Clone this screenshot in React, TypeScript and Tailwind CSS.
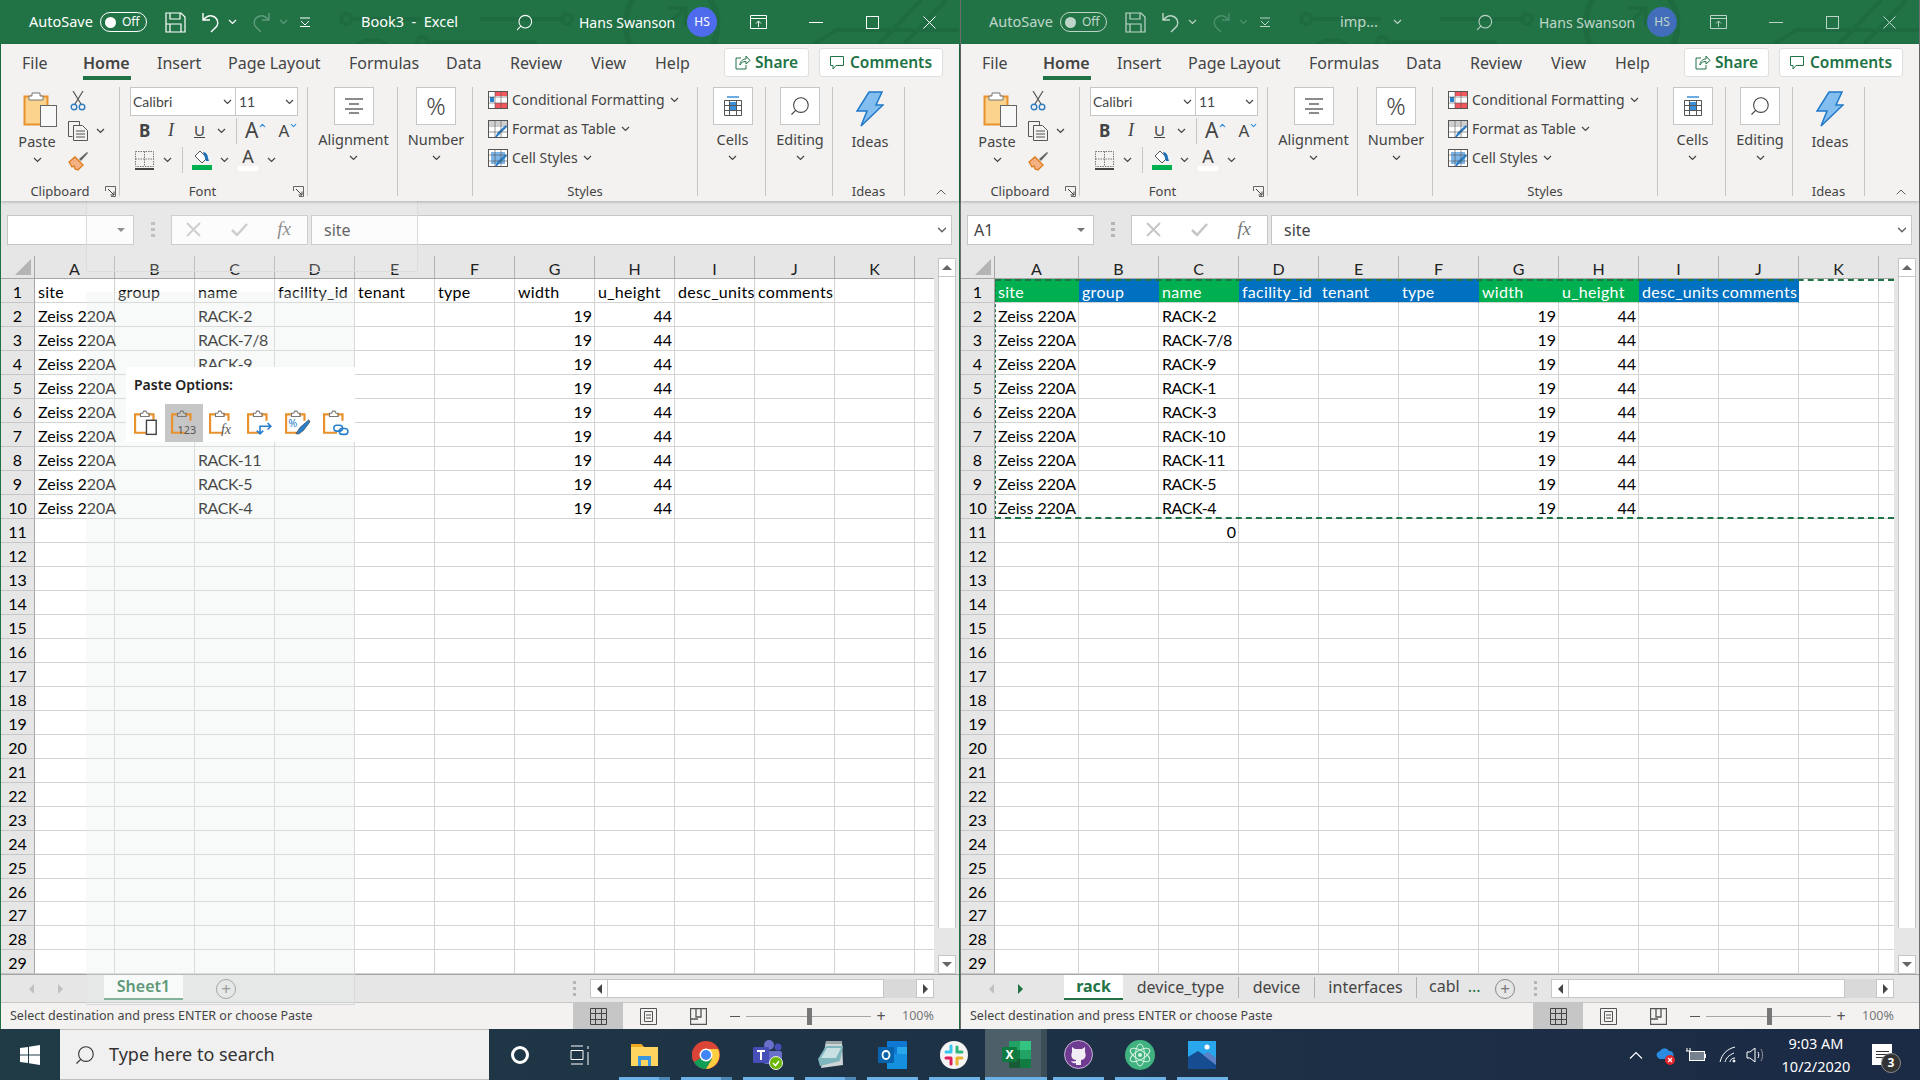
import type { ReactNode } from 'react';
import { ChevronDown, ChevronUp, Search } from 'lucide-react';

const COLS = ['A', 'B', 'C', 'D', 'E', 'F', 'G', 'H', 'I', 'J', 'K'];
const HEADERS = ['site', 'group', 'name', 'facility_id', 'tenant', 'type', 'width', 'u_height', 'desc_units', 'comments', ''];
const HEADER_FILL = ['bg-[#00b050]', 'bg-[#0070c0]', 'bg-[#00b050]', 'bg-[#0070c0]', 'bg-[#0070c0]', 'bg-[#0070c0]', 'bg-[#00b050]', 'bg-[#00b050]', 'bg-[#0070c0]', 'bg-[#0070c0]', ''];
const RACKS = ['RACK-2', 'RACK-7/8', 'RACK-9', 'RACK-1', 'RACK-3', 'RACK-10', 'RACK-11', 'RACK-5', 'RACK-4'];
const ROW_COUNT = 29;

const TABS = [
  { label: 'File', width: 'w-[61px]' },
  { label: 'Home', width: 'w-[74px]' },
  { label: 'Insert', width: 'w-[71px]' },
  { label: 'Page Layout', width: 'w-[121px]' },
  { label: 'Formulas', width: 'w-[97px]' },
  { label: 'Data', width: 'w-[64px]' },
  { label: 'Review', width: 'w-[81px]' },
  { label: 'View', width: 'w-[64px]' },
  { label: 'Help', width: 'w-[50px]' },
];

function Caret({ className = '' }: { className?: string }) {
  return (
    <svg width="9" height="6" viewBox="0 0 9 6" className={className}>
      <path d="M1 1l3.5 3.5L8 1" fill="none" stroke="currentColor" strokeWidth="1.2" />
    </svg>
  );
}

function Launcher() {
  return (
    <svg width="11" height="11" viewBox="0 0 11 11">
      <path d="M.5 5V.5H10.5V10.5H6" fill="none" stroke="#666" />
      <path d="M3 3l6 6M9 5.5V9H5.5" fill="none" stroke="#444" />
    </svg>
  );
}

function CircuitLines() {
  return (
    <svg className="absolute inset-0 w-full h-full" viewBox="0 0 960 44" fill="none" stroke="#1e6b41" strokeWidth="4">
      <circle cx="346" cy="19" r="5" />
      <path d="M351 19h70M565 19h-85" />
      <circle cx="567" cy="19" r="5" />
      <circle cx="372" cy="66" r="26" />
      <circle cx="422" cy="42" r="5" />
      <path d="M427 42h110" />
      <circle cx="672" cy="24" r="46" strokeWidth="6" />
      <path d="M662 30l24-22M668 8h18v18" />
      <path d="M815 44l22-14h123M880 44l42-44M905 44l42-44" />
    </svg>
  );
}

function TitleBar({ active, title }: { active: boolean; title: string }) {
  return (
    <div className="relative h-[44px] shrink-0 bg-[#217346] text-white">
      <CircuitLines />
      <div className={`relative flex h-full items-center ${active ? '' : 'opacity-70'}`}>
        <span className="ml-[28px] w-[71px] text-[14.5px]">AutoSave</span>
        <div className="flex h-[20px] w-[47px] items-center rounded-full border border-white pl-[4px]">
          <span className="h-[11px] w-[11px] rounded-full bg-white" />
          <span className="ml-[6px] text-[12px]">Off</span>
        </div>
        <svg width="21" height="21" viewBox="0 0 21 21" fill="none" stroke="white" strokeWidth="1.2" className="ml-[18px]">
          <path d="M1 1h15l4 4v15H1zM5 1v6h10V1M5 20v-8h11v8M1 12h4" />
        </svg>
        <svg width="20" height="21" viewBox="0 0 20 21" fill="none" stroke="white" strokeWidth="1.4" className="ml-[15px]">
          <path d="M2 1v7h7M2 8c3-3 6-5 9-4 5 1 7 6 5 10l-6 6" />
        </svg>
        <Caret className="ml-[7px]" />
        <svg width="20" height="21" viewBox="0 0 20 21" fill="none" stroke="#5f9c7e" strokeWidth="1.4" className="ml-[14px]">
          <path d="M18 1v7h-7M18 8c-3-3-6-5-9-4-5 1-7 6-5 10l6 6" />
        </svg>
        <Caret className="ml-[8px] text-[#5f9c7e]" />
        <svg width="10" height="10" viewBox="0 0 10 10" fill="none" stroke="white" className="ml-[12px]">
          <path d="M0 1h10M1 4l4 4 4-4M0 9.500h10" />
        </svg>
        <div className="ml-[51px] flex w-[150px] items-center text-[14.5px] whitespace-pre">
          {active ? (
            title
          ) : (
            <>
              <span className="ml-[19px] w-[53px]">{title}</span>
              <Caret />
            </>
          )}
        </div>
        <Search size={19} strokeWidth={1.3} className="ml-[4px] -scale-x-100" />
        <span className="ml-[45px] w-[100px] text-[14px] whitespace-nowrap">Hans Swanson</span>
        <span className="ml-[8px] flex h-[30px] w-[30px] items-center justify-center rounded-full bg-[#4f6bed] text-[12px]">HS</span>
        <svg width="17" height="14" viewBox="0 0 17 14" fill="none" stroke="white" className="ml-[33px]">
          <path d="M.5.5h16v13H.5zM.5 3.500h16M8.500 12V6M6 8.500l2.500-2.500L11 8.500" />
        </svg>
        <span className="ml-[42px] h-[1px] w-[14px] bg-white" />
        <span className="ml-[43px] h-[13px] w-[13px] border border-white" />
        <svg width="13" height="13" viewBox="0 0 13 13" stroke="white" className="ml-[44px]">
          <path d="M.5.5l12 12M12.500.5l-12 12" />
        </svg>
      </div>
    </div>
  );
}

function RibbonTabs() {
  return (
    <div className="flex h-[36px] items-center pl-[21px] text-[16px] text-[#444]">
      {TABS.map((tab) => (
        <div key={tab.label} className={`relative h-full leading-[38px] ${tab.width} ${tab.label === 'Home' ? 'font-semibold' : ''}`}>
          {tab.label}
          {tab.label === 'Home' && <span className="absolute left-0 top-[32px] h-[4px] w-[48px] bg-[#217346]" />}
        </div>
      ))}
      <div className="ml-[19px] flex h-[29px] w-[85px] items-center justify-center gap-[4px] rounded-[3px] border border-[#e1dfdd] bg-white pt-[1px] text-[15.5px] font-semibold text-[#217346]">
        <svg width="16" height="15" viewBox="0 0 16 15" fill="none" stroke="#217346">
          <path d="M6 3H1v11h10v-4M5 10c0-4 3-6 6-6V1l4 4.500L11 9V6.500c-3 0-5 1-6 3.500z" />
        </svg>
        Share
      </div>
      <div className="ml-[10px] flex h-[29px] w-[124px] items-center justify-center gap-[6px] rounded-[3px] border border-[#e1dfdd] bg-white pt-[1px] text-[15.5px] font-semibold text-[#217346]">
        <svg width="14" height="14" viewBox="0 0 14 14" fill="none" stroke="#217346">
          <path d="M.5.5h13v9H6L3 13V9.500H.5z" />
        </svg>
        Comments
      </div>
    </div>
  );
}

function Group({ width, label, labelShift = '', launcher, children }: { width: string; label?: string; labelShift?: string; launcher?: boolean; children: ReactNode }) {
  return (
    <div className={`relative my-[7px] h-[109px] shrink-0 border-r border-[#c8c6c4] ${width}`}>
      {children}
      <div className={`absolute inset-x-0 top-[96px] text-center text-[13px] leading-[17px] text-[#444] ${labelShift}`}>{label}</div>
      {launcher && (
        <div className="absolute right-[3px] top-[99px]">
          <Launcher />
        </div>
      )}
    </div>
  );
}

function BoxedGroup({ width, label, icon }: { width: string; label: string; icon: ReactNode }) {
  return (
    <Group width={width}>
      <div className="flex flex-col items-center pl-[2px] text-[#444]">
        <div className="flex h-[38px] w-[40px] items-center justify-center border border-[#c6c6c6] bg-white">{icon}</div>
        <span className="mt-[4px] text-[14.5px] leading-[20px]">{label}</span>
        <Caret className="mt-[6px]" />
      </div>
    </Group>
  );
}

function ClipboardGroup() {
  return (
    <Group width="w-[119px]" label="Clipboard" launcher>
      <div className="flex pl-[8px] text-[#444]">
        <div className="flex w-[56px] flex-col items-center">
          <svg width="35" height="38" viewBox="0 0 35 38" className="ml-[6px] mt-[3px]">
            <rect x="1.500" y="6.500" width="23" height="28" fill="#fbd38d" stroke="#e8912d" strokeWidth="2" />
            <path d="M9 6V3h8v3h3v4H6V6z" fill="#fff" stroke="#777" />
            <rect x="17.500" y="15.500" width="16" height="21" fill="#f8f8f8" stroke="#666" />
          </svg>
          <span className="mt-[3px] text-[14.5px] leading-[20px]">Paste</span>
          <Caret className="mt-[6px]" />
        </div>
        <div className="flex flex-col pl-[3px]">
          <svg width="16" height="20" viewBox="0 0 16 20" fill="none" className="ml-[2px] mt-[4px]">
            <path d="M3 0l8 13M13 0L5 13" stroke="#555" strokeWidth="1.200" />
            <circle cx="4" cy="16" r="2.800" stroke="#2f7fc1" strokeWidth="1.400" />
            <circle cx="12" cy="16" r="2.800" stroke="#2f7fc1" strokeWidth="1.400" />
          </svg>
          <div className="mt-[10px] flex items-center">
            <svg width="21" height="20" viewBox="0 0 21 20" fill="none" stroke="#555">
              <path d="M.5.5h11v4M.5.5v15h4M5.500 4.500h9l5 5v10h-14zM8 10h9M8 13h9M8 16h9" />
            </svg>
            <Caret className="ml-[7px]" />
          </div>
          <svg width="21" height="20" viewBox="0 0 21 20" className="mt-[10px]">
            <path d="M1 11l6-5 8 8-5 5-3-1-1-3-2 1z" fill="#f4b183" stroke="#e07b1a" strokeWidth="1.300" />
            <path d="M11 8l8-7 1 1-7 8z" fill="#666" />
          </svg>
        </div>
      </div>
    </Group>
  );
}

function FontGroup() {
  return (
    <Group width="w-[188px]" label="Font" labelShift="pr-[22px]" launcher>
      <div className="flex pl-[10px] text-[#444]">
        <div className="flex h-[29px] w-[106px] items-center justify-between border border-[#c6c6c6] bg-white pl-[2px] pr-[3px] font-['Lato',sans-serif] text-[14px]">
          Calibri <Caret />
        </div>
        <div className="flex h-[29px] w-[62px] items-center justify-between border border-l-0 border-[#c6c6c6] bg-white pl-[3px] pr-[3px] font-['Lato',sans-serif] text-[14px]">
          11 <Caret />
        </div>
      </div>
      <div className="flex h-[29px] items-center pl-[19px] text-[#444]">
        <span className="w-[29px] text-[17px] font-bold">B</span>
        <span className="w-[26px] font-['Liberation_Serif',serif] text-[18px] italic">I</span>
        <span className="w-[22px] text-[15px] underline">U</span>
        <Caret className="ml-[1px]" />
        <span className="ml-[10px] h-[26px] w-[1px] bg-[#c8c6c4]" />
        <span className="ml-[8px] text-[21px] leading-none">A</span>
        <ChevronUp size={9} className="-mt-[10px] text-[#2f8fdf]" strokeWidth={3} />
        <span className="ml-[11px] text-[17px] leading-none">A</span>
        <ChevronDown size={9} className="-mt-[10px] text-[#2f8fdf]" strokeWidth={3} />
      </div>
      <div className="flex h-[30px] items-center pl-[15px] text-[#444]">
        <svg width="19" height="19" viewBox="0 0 19 19" fill="none" stroke="#777" strokeDasharray="1.500 1">
          <path d="M.5.5h18v15H.5zM9.500.5v15M.5 8h18" />
          <path d="M0 18h19" stroke="#444" strokeWidth="2" strokeDasharray="none" />
        </svg>
        <Caret className="ml-[9px]" />
        <span className="ml-[10px] h-[26px] w-[1px] bg-[#c8c6c4]" />
        <div className="ml-[9px] flex w-[20px] flex-col">
          <svg width="20" height="15" viewBox="0 0 20 15" fill="none">
            <path d="M8 1l7 7-5 5-7-7z" stroke="#555" fill="#fff" />
            <path d="M11 2c3 0 5 3 5 6l1 3h-3z" fill="#1f6fb5" />
          </svg>
          <span className="h-[5px] bg-[#00b050]" />
        </div>
        <Caret className="ml-[8px]" />
        <div className="ml-[9px] flex w-[20px] flex-col items-center">
          <span className="text-[18px] leading-[15px]">A</span>
          <span className="mt-[2px] h-[5px] w-[20px] bg-white" />
        </div>
        <Caret className="ml-[9px]" />
      </div>
    </Group>
  );
}

function StyleRow({ label, icon }: { label: string; icon: ReactNode }) {
  return (
    <div className="flex h-[29px] items-center text-[14px] text-[#444]">
      {icon}
      <span className="ml-[4px] mr-[5px] whitespace-nowrap">{label}</span>
      <Caret />
    </div>
  );
}

function TableIcon({ kind }: { kind: 'conditional' | 'table' | 'styles' }) {
  return (
    <svg width="20" height="18" viewBox="0 0 20 18">
      <rect x=".5" y=".5" width="19" height="17" fill="#fff" stroke="#555" />
      {kind === 'conditional' && (
        <g>
          <rect x="7" y="1" width="12" height="4" fill="#f4565e" />
          <rect x="2" y="6" width="4" height="5" fill="#2a7fcb" />
          <rect x="7" y="12" width="12" height="5" fill="#f4565e" />
        </g>
      )}
      {kind === 'table' && (
        <g>
          <rect x="1" y="1" width="18" height="4" fill="#cfcfcf" />
          <path d="M7 17l3-5 8-7 1 2-7 7-3 3z" fill="#2a7fcb" />
        </g>
      )}
      {kind === 'styles' && (
        <g>
          <rect x="3" y="3" width="14" height="12" fill="#7db6e8" />
          <path d="M7 17l3-5 8-7 1 2-7 7-3 3z" fill="#2a7fcb" />
        </g>
      )}
      <path d="M7 .5v17M13 .5v17M.5 6h19M.5 12h19" stroke="#555" strokeWidth=".6" />
    </svg>
  );
}

function Ribbon() {
  return (
    <div className="relative z-10 h-[157px] shrink-0 bg-[#f3f2f1] shadow-[0_1px_3px_rgba(0,0,0,0.25)]">
      <RibbonTabs />
      <div className="flex">
        <ClipboardGroup />
        <FontGroup />
        <BoxedGroup
          width="w-[90px]"
          label="Alignment"
          icon={
            <svg width="18" height="16" viewBox="0 0 18 16" stroke="#666" strokeWidth="1.300">
              <path d="M0 1h18M4 6h10M0 11h18M4 15h10" />
            </svg>
          }
        />
        <BoxedGroup width="w-[75px]" label="Number" icon={<span className="text-[24px] font-light leading-none text-[#444]">%</span>} />
        <Group width="w-[225px]" label="Styles">
          <div className="-mt-[2px] pl-[15px]">
            <StyleRow label="Conditional Formatting" icon={<TableIcon kind="conditional" />} />
            <StyleRow label="Format as Table" icon={<TableIcon kind="table" />} />
            <StyleRow label="Cell Styles" icon={<TableIcon kind="styles" />} />
          </div>
        </Group>
        <BoxedGroup
          width="w-[68px]"
          label="Cells"
          icon={
            <svg width="20" height="20" viewBox="0 0 20 20" fill="none">
              <rect x="6" y="6" width="8" height="8" fill="#3a8fd9" />
              <path d="M1.500 4.500h17v15h-17zM1.500 9.500h17M1.500 14.500h17M6.500 4.500v15M13.500 4.500v15" stroke="#555" />
              <path d="M4 1h12" stroke="#3a8fd9" strokeWidth="1.500" />
            </svg>
          }
        />
        <BoxedGroup
          width="w-[67px]"
          label="Editing"
          icon={<Search size={22} strokeWidth={1.2} className="-scale-x-100 text-[#444]" />}
        />
        <Group width="w-[72px]" label="Ideas">
          <div className="flex flex-col items-center pl-[3px] text-[#444]">
            <svg width="28" height="36" viewBox="0 0 28 36" className="mt-[4px]">
              <path d="M13 1h13l-6 13h7L5 35l6-15H1z" fill="#84bdf0" stroke="#1f78c8" strokeWidth="1.500" />
            </svg>
            <span className="mt-[4px] text-[14.5px] leading-[20px]">Ideas</span>
          </div>
        </Group>
        <div className="ml-[28px] mt-[104px] text-[#444]">
          <ChevronUp size={16} strokeWidth={1.3} />
        </div>
      </div>
    </div>
  );
}

function FormulaBar({ nameBox }: { nameBox: string }) {
  return (
    <div className="flex h-[55px] shrink-0 items-center bg-[#e6e6e6] pl-[6px] pr-[7px] pt-[2px]">
      <div className="flex h-[30px] w-[127px] items-center border border-[#c6c6c6] bg-white pl-[6px] pr-[8px] text-[16px] text-[#444]">
        {nameBox}
        <span className="ml-auto border-x-[4px] border-t-[4px] border-x-transparent border-t-[#777]" />
      </div>
      <div className="ml-[17px] flex flex-col gap-[3px]">
        <span className="h-[3px] w-[4px] bg-[#b5b5b5]" />
        <span className="h-[3px] w-[4px] bg-[#b5b5b5]" />
        <span className="h-[3px] w-[4px] bg-[#b5b5b5]" />
      </div>
      <div className="ml-[16px] flex h-[30px] w-[137px] items-center justify-between border border-[#c6c6c6] bg-white pl-[14px] pr-[16px]">
        <svg width="15" height="15" viewBox="0 0 15 15" stroke="#c6c6c6" strokeWidth="2">
          <path d="M1 1l13 13M14 1L1 14" />
        </svg>
        <svg width="17" height="14" viewBox="0 0 17 14" fill="none" stroke="#c6c6c6" strokeWidth="2.500">
          <path d="M1 7l5 5L16 1" />
        </svg>
        <span className="font-['Liberation_Serif',serif] text-[19px] italic text-[#777]">fx</span>
      </div>
      <div className="ml-[3px] flex h-[30px] flex-1 items-center justify-between border border-[#c6c6c6] bg-white pl-[12px] pr-[2px] text-[16px] text-[#444]">
        site
        <ChevronDown size={14} strokeWidth={2.5} className="text-[#666]" />
      </div>
    </div>
  );
}

function ColumnHeaders({ active }: { active: boolean }) {
  return (
    <div className="flex h-[23.3px] shrink-0 border-b border-[#a6a6a6] bg-[#e6e6e6] font-['Lato',sans-serif] text-[16px] text-[#222]">
      <div className="relative w-[34px] shrink-0 border-r border-[#a6a6a6]">
        <span className="absolute bottom-[3px] right-[3px] border-b-[16px] border-l-[16px] border-b-[#b4b4b4] border-l-transparent" />
      </div>
      {COLS.map((col, i) => (
        <div
          key={col}
          className={`shrink-0 border-r border-[#b4b4b4] text-center leading-[25px] ${i === 0 && !active ? 'w-[84px]' : 'w-[80px]'}`}
        >
          {col}
        </div>
      ))}
    </div>
  );
}

function cellText(row: number, col: number, active: boolean) {
  if (row === 1) return HEADERS[col];
  if (row <= 10) {
    if (col === 0) return 'Zeiss 220A';
    // rows 5-7 of column C sit fully behind the paste popup on the left window
    if (col === 2) return active && row >= 5 && row <= 7 ? '' : RACKS[row - 2];
    if (col === 6) return '19';
    if (col === 7) return '44';
  }
  if (!active && row === 11 && col === 2) return '0';
  return '';
}

function Grid({ active }: { active: boolean }) {
  const rows = Array.from({ length: ROW_COUNT }, (_, i) => i + 1);
  return (
    <div className="relative font-['Lato',sans-serif] text-[16px] text-black">
      {rows.map((row) => (
        <div key={row} className="flex h-[23.97px] bg-white">
          <div className="w-[34px] shrink-0 border-r border-b border-r-[#a6a6a6] border-b-[#c6c6c6] bg-[#e6e6e6] text-center leading-[25px]">
            {row}
          </div>
          {COLS.map((col, i) => {
            const text = cellText(row, i, active);
            const numeric = (row > 1 && (i === 6 || i === 7)) || (row === 11 && i === 2);
            const fill = !active && row === 1 ? HEADER_FILL[i] : '';
            const tight = row > 1 && i === 2 && !numeric;
            return (
              <div
                key={col}
                className={`shrink-0 border-r border-b border-[#d4d4d4] pl-[3px] pr-[2px] leading-[25px] whitespace-nowrap ${i === 0 && !active ? 'w-[84px]' : 'w-[80px]'} ${numeric ? 'text-right' : ''} ${row === 1 ? 'tracking-[0.3px]' : ''} ${tight ? 'tracking-[-0.4px]' : ''} ${fill} ${fill ? 'border-r-transparent text-white' : ''}`}
              >
                {text}
              </div>
            );
          })}
          <div className="flex-1 border-b border-[#d4d4d4]" />
        </div>
      ))}
      {!active && (
        <div className="absolute left-[34px] right-0 top-0 h-[240px] border-y-2 border-l border-dashed border-[#217346]" />
      )}
    </div>
  );
}

function ScrollButton({ dir }: { dir: 'up' | 'down' | 'left' | 'right' }) {
  const arrow = {
    up: 'border-x-[5px] border-b-[5px] border-x-transparent border-b-[#666]',
    down: 'border-x-[5px] border-t-[5px] border-x-transparent border-t-[#666]',
    left: 'border-y-[5px] border-r-[5px] border-y-transparent border-r-[#444]',
    right: 'border-y-[5px] border-l-[5px] border-y-transparent border-l-[#444]',
  }[dir];
  return (
    <div className="flex h-[19px] w-[18px] shrink-0 items-center justify-center border border-[#c6c6c6] bg-white">
      <span className={arrow} />
    </div>
  );
}

function SheetTabs({ active }: { active: boolean }) {
  return (
    <div className="flex h-[28px] shrink-0 items-center border-t border-[#a6a6a6] bg-[#e6e6e6] text-[16px]">
      <div className="ml-[28px] flex w-[75px] items-center gap-[24px]">
        <span className="border-y-[5px] border-r-[5px] border-y-transparent border-r-[#c0c0c0]" />
        <span className={`border-y-[5px] border-l-[5px] border-y-transparent ${active ? 'border-l-[#c0c0c0]' : 'border-l-[#217346]'}`} />
      </div>
      {active ? (
        <div className="flex h-[25px] w-[79px] items-center justify-center self-start border-b-2 border-[#5a9a7b] bg-white pb-[2px] font-semibold text-[#217346]">Sheet1</div>
      ) : (
        <div className="flex h-[25px] items-center self-start text-[#444]">
          <div className="flex h-full w-[59px] items-center justify-center border-b-2 border-[#217346] bg-white pb-[2px] font-bold text-[#217346]">rack</div>
          <div className="flex h-[21px] w-[116px] items-center justify-center border-r border-[#b4b4b4] pb-[2px]">device_type</div>
          <div className="flex h-[21px] w-[76px] items-center justify-center border-r border-[#b4b4b4] pb-[2px]">device</div>
          <div className="flex h-[21px] w-[102px] items-center justify-center border-r border-[#b4b4b4] pb-[2px]">interfaces</div>
          <div className="h-[21px] w-[66px] whitespace-nowrap pl-[12px] leading-[19px]">
            cabl <span className="ml-[4px] text-[#217346]">...</span>
          </div>
        </div>
      )}
      <div className={`flex h-[20px] w-[20px] items-center justify-center rounded-full border border-[#888] text-[17px] leading-none text-[#777] ${active ? 'ml-[33px]' : 'ml-[12px]'}`}>+</div>
      <div className={`flex flex-col gap-[3px] ${active ? 'ml-[337px]' : 'ml-[19px]'}`}>
        <span className="h-[3px] w-[3px] bg-[#b5b5b5]" />
        <span className="h-[3px] w-[3px] bg-[#b5b5b5]" />
        <span className="h-[3px] w-[3px] bg-[#b5b5b5]" />
      </div>
      <div className="ml-[14px] flex flex-1 items-center bg-[#d9d9d9]">
        <ScrollButton dir="left" />
        <div className="h-[19px] w-[276px] border-y border-r border-[#c6c6c6] bg-white" />
        <div className="flex-1" />
        <ScrollButton dir="right" />
      </div>
      <div className="w-[25px]" />
    </div>
  );
}

function StatusBar() {
  return (
    <div className="flex h-[27px] shrink-0 items-center border-t border-[#c6c6c6] bg-[#f3f2f1] pl-[9px] text-[12.5px] text-[#444]">
      <span className="whitespace-nowrap">Select destination and press ENTER or choose Paste</span>
      <div className="ml-auto flex h-full w-[50px] items-center justify-center bg-[#c6c6c6]">
        <svg width="17" height="17" viewBox="0 0 17 17" fill="none" stroke="#444">
          <path d="M.5.5h16v16H.5zM5.500.5v16M11.500.5v16M.5 5.500h16M.5 11.500h16" />
        </svg>
      </div>
      <div className="flex w-[50px] justify-center">
        <svg width="17" height="17" viewBox="0 0 17 17" fill="none" stroke="#555">
          <path d="M.5.5h16v16H.5zM4.500 3.500h8v10h-8zM6 7h5M6 10h5" />
        </svg>
      </div>
      <div className="flex w-[50px] justify-center">
        <svg width="17" height="17" viewBox="0 0 17 17" fill="none" stroke="#555" strokeWidth="1.300">
          <path d="M.5 16.500V.5h16v16zM6 .5V9h5V.5M.5 11H8" />
        </svg>
      </div>
      <span className="ml-[7px] h-[1px] w-[10px] bg-[#555]" />
      <div className="relative ml-[6px] h-[1px] w-[125px] bg-[#a6a6a6]">
        <span className="absolute left-[61px] top-[-8px] h-[17px] w-[5px] bg-[#777]" />
      </div>
      <span className="ml-[4px] w-[12px] text-center text-[16px] leading-none text-[#555]">+</span>
      <span className="ml-[15px] mr-[25px] w-[32px] whitespace-nowrap text-[12.5px] text-[#777]">100%</span>
    </div>
  );
}

function ExcelWindow({ active, title, nameBox }: { active: boolean; title: string; nameBox: string }) {
  return (
    <div className={`relative flex h-full w-[960px] shrink-0 flex-col border-x border-b ${active ? 'border-[#217346]' : 'border-[#6d6d6d]'}`}>
      <TitleBar active={active} title={title} />
      <Ribbon />
      <FormulaBar nameBox={nameBox} />
      <div className="flex min-h-0 shrink-0 bg-[#e6e6e6]">
        <div className="flex w-[933px] flex-col">
          <ColumnHeaders active={active} />
          <Grid active={active} />
        </div>
        <div className="flex flex-col pl-[4px] pt-[2px]">
          <ScrollButton dir="up" />
          <div className="h-[651px] w-[18px] border-x border-[#c6c6c6] bg-white" />
          <div className="flex-1" />
          <ScrollButton dir="down" />
        </div>
      </div>
      <SheetTabs active={active} />
      <StatusBar />
      {active && (
        <>
          <div className="absolute left-[85px] top-[200px] h-[72px] w-[332px] border border-[#dcdcdc] bg-[#eeeeee]/20" />
          <div className="absolute left-[85px] top-[292px] h-[713px] w-[269px] border-r border-b border-[#d8dad9] bg-[#e9efec]/30" />
          <PasteOptions />
        </>
      )}
    </div>
  );
}

function PasteIcon({ children }: { children: ReactNode }) {
  return (
    <svg width="26" height="26" viewBox="0 0 24 24" fill="none">
      <path d="M6 4H1v17h12" stroke="#e8912d" strokeWidth="2" />
      <path d="M13 4h5v6" stroke="#e8912d" strokeWidth="2" />
      <path d="M6 6V3h2l1-2h2l1 2h2v3z" stroke="#777" />
      {children}
    </svg>
  );
}

function PasteOptions() {
  return (
    <div className="absolute left-[125px] top-[367px] h-[75px] w-[229px] bg-white pl-[8px] font-['Noto_Sans',sans-serif] text-[#222]">
      <div className="h-[37px] pt-[7px] text-[14px] font-semibold leading-[22px]">Paste Options:</div>
      <div className="-ml-[8px] flex pl-[1px]">
        <div className="flex h-[38px] w-[38px] items-center justify-center pl-[2px]">
          <PasteIcon>
            <rect x="11.500" y="9.500" width="9" height="13" fill="#fff" stroke="#444" strokeWidth="1.300" />
          </PasteIcon>
        </div>
        <div className="flex h-[38px] w-[38px] items-center justify-center bg-[#c6c6c6]">
          <PasteIcon>
            <text x="6" y="22" fontSize="10" fill="#555" fontFamily="Noto Sans">123</text>
          </PasteIcon>
        </div>
        <div className="flex h-[38px] w-[38px] items-center justify-center">
          <PasteIcon>
            <text x="11" y="22" fontSize="13" fontStyle="italic" fill="#555" fontFamily="Liberation Serif">fx</text>
          </PasteIcon>
        </div>
        <div className="flex h-[38px] w-[38px] items-center justify-center">
          <PasteIcon>
            <path d="M12 22v-7h10M19 12l3 3-3 3M9 19l3 3 3-3" stroke="#2a7fcb" strokeWidth="1.500" />
          </PasteIcon>
        </div>
        <div className="flex h-[38px] w-[38px] items-center justify-center">
          <PasteIcon>
            <path d="M10 22l4-6 8-7 1 2-6 8-4 3z" fill="#2a7fcb" stroke="#444" strokeWidth=".6" />
            <text x="3" y="16" fontSize="10" fill="#2a7fcb">%</text>
          </PasteIcon>
        </div>
        <div className="flex h-[38px] w-[38px] items-center justify-center">
          <PasteIcon>
            <rect x="10" y="14" width="8" height="5.500" rx="2.700" stroke="#2a7fcb" strokeWidth="1.400" />
            <rect x="15" y="17" width="8" height="5.500" rx="2.700" stroke="#2a7fcb" strokeWidth="1.400" />
          </PasteIcon>
        </div>
      </div>
    </div>
  );
}

function AppIcon({ children, underline, accent, current }: { children: ReactNode; underline?: boolean; accent?: boolean; current?: boolean }) {
  return (
    <div className={`relative flex h-full w-[62px] shrink-0 items-center justify-center ${current ? 'bg-[linear-gradient(90deg,#4d606a_90%,#3b4e58_90%)]' : ''}`}>
      {children}
      {underline && (
        <div className={`absolute bottom-0 flex h-[3px] bg-[#6cb2e8] ${current ? 'inset-x-0' : 'left-[5.500px] w-[51px]'}`}>
          {accent && <span className="ml-auto h-full w-[11px] bg-[#4d87b5]" />}
        </div>
      )}
    </div>
  );
}

function Taskbar() {
  return (
    <div className="flex h-[50.700px] shrink-0 items-center bg-gradient-to-r from-[#203a46] to-[#1b2a45] text-white">
      <div className="flex w-[60px] justify-center">
        <svg width="20" height="20" viewBox="0 0 20 20" fill="white">
          <path d="M0 3l8-1v7.500H0zM9 1.800l11-1.800v9.500H9zM0 10.500h8V18l-8-1zM9 10.500h11V20L9 18.200z" />
        </svg>
      </div>
      <div className="flex h-full w-[429px] items-center border-y border-[#c0c0c0] bg-[#f0f0f0] pl-[14px] text-[18px] text-[#333]">
        <Search size={22} strokeWidth={1.2} className="-scale-x-100" />
        <span className="ml-[13px]">Type here to search</span>
      </div>
      <AppIcon>
        <span className="h-[18px] w-[18px] rounded-full border-[3px] border-white" />
      </AppIcon>
      <AppIcon>
        <svg width="20" height="20" viewBox="0 0 20 20" fill="none" stroke="white" className="-ml-[4px]">
          <path d="M1 1h12M1 19h12M1 5.500h12v9H1zM18 1v3M18 7v13" />
        </svg>
      </AppIcon>
      <AppIcon underline accent>
        <svg width="27" height="24" viewBox="0 0 27 24">
          <path d="M0 1h10l3 3h14v19H0z" fill="#ffd45f" />
          <path d="M0 1h10l3 3H0z" fill="#f0a91f" />
          <path d="M7 13h13v10h-3v-6h-7v6H7z" fill="#3a96dd" />
        </svg>
      </AppIcon>
      <AppIcon underline accent>
        <svg width="28" height="28" viewBox="0 0 28 28">
          <circle cx="14" cy="14" r="14" fill="#db4437" />
          <path d="M14 14L2 21A14 14 0 0 1 2 7z" fill="#db4437" />
          <path d="M14 14L1.900 21A14 14 0 0 0 14 28l6-10z" fill="#0f9d58" />
          <path d="M14 8h12a14 14 0 0 1-12 20l6-10z" fill="#ffcd40" />
          <circle cx="14" cy="14" r="6.500" fill="#fff" />
          <circle cx="14" cy="14" r="5" fill="#4285f4" />
        </svg>
      </AppIcon>
      <AppIcon underline>
        <svg width="32" height="30" viewBox="0 0 32 30">
          <circle cx="17" cy="5" r="5" fill="#6a6fc9" />
          <circle cx="26" cy="7" r="3.500" fill="#464eb8" />
          <rect x="12" y="11" width="18" height="13" rx="2" fill="#6a6fc9" />
          <rect x="1" y="7" width="16" height="16" rx="1.500" fill="#464eb8" />
          <path d="M5 11h8M9 11v9" stroke="white" strokeWidth="2" />
          <circle cx="24" cy="23" r="6.500" fill="#6bb700" stroke="#eee" />
          <path d="M21 23l2.500 2.500L27 21" fill="none" stroke="white" strokeWidth="1.500" />
        </svg>
      </AppIcon>
      <AppIcon underline accent>
        <svg width="27" height="29" viewBox="0 0 27 29">
          <path d="M9 1h16l1 24-22 3z" fill="#cfd6d8" />
          <path d="M9 1h16v3H9z" fill="#9aa5a8" />
          <path d="M9 6L1 19l2 7 20-5 3-15z" fill="#7fb5bc" />
          <path d="M10 8h14L19 18H4z" fill="#e8f3f3" opacity=".7" />
        </svg>
      </AppIcon>
      <AppIcon underline>
        <svg width="29" height="28" viewBox="0 0 29 28">
          <rect x="9" y="0" width="20" height="28" rx="1" fill="#0f78d4" />
          <rect x="19" y="6" width="10" height="7" fill="#28a8ea" />
          <path d="M9 13h20v15H9z" fill="#1490df" />
          <rect x="0" y="6" width="16" height="16" rx="1" fill="#0a64ad" />
          <ellipse cx="8" cy="14" rx="3.500" ry="4" fill="none" stroke="white" strokeWidth="1.800" />
        </svg>
      </AppIcon>
      <AppIcon underline>
        <svg width="28" height="28" viewBox="0 0 28 28">
          <circle cx="14" cy="14" r="14" fill="#f4f4f4" />
          <path d="M11 5v5M6 11h5" stroke="#36c5f0" strokeWidth="3" strokeLinecap="round" />
          <path d="M17 6v5M17 11h5" stroke="#2eb67d" strokeWidth="3" strokeLinecap="round" />
          <path d="M17 17v6M17 17h5" stroke="#ecb22e" strokeWidth="3" strokeLinecap="round" />
          <path d="M11 17v6M6 17h5" stroke="#e01e5a" strokeWidth="3" strokeLinecap="round" />
        </svg>
      </AppIcon>
      <AppIcon current underline>
        <svg width="29" height="29" viewBox="0 0 29 29">
          <rect x="7" y="1" width="22" height="27" rx="1" fill="#21a366" />
          <rect x="18" y="1" width="11" height="9" fill="#33c481" />
          <rect x="7" y="10" width="11" height="9" fill="#107c41" />
          <rect x="18" y="19" width="11" height="9" fill="#107c41" />
          <rect x="7" y="19" width="11" height="9" fill="#185c37" />
          <rect x="0" y="7" width="15" height="15" rx="1" fill="#0f7a3f" />
          <text x="3.500" y="19" fontSize="12" fontWeight="700" fill="white" fontFamily="Noto Sans">X</text>
        </svg>
      </AppIcon>
      <AppIcon underline>
        <svg width="29" height="29" viewBox="0 0 29 29">
          <circle cx="14.500" cy="14.500" r="14" fill="#6f3a92" stroke="#c9b7d6" />
          <path d="M8 7l3 2h7l3-2v5c2 5-1 8-4 8v5h-5v-2c-3 1-4-1-5-2 2 0 2 1 5 0v-1c-3 0-6-3-4-8z" fill="#f2edf5" />
        </svg>
      </AppIcon>
      <AppIcon underline>
        <svg width="30" height="30" viewBox="0 0 30 30" fill="none">
          <circle cx="15" cy="15" r="15" fill="#3fb27f" />
          <ellipse cx="15" cy="15" rx="11" ry="4.500" stroke="#d8f2e4" transform="rotate(30 15 15)" />
          <ellipse cx="15" cy="15" rx="11" ry="4.500" stroke="#d8f2e4" transform="rotate(-30 15 15)" />
          <ellipse cx="15" cy="15" rx="4.500" ry="11" stroke="#d8f2e4" />
          <circle cx="15" cy="15" r="2" fill="#d8f2e4" />
        </svg>
      </AppIcon>
      <AppIcon underline>
        <svg width="28" height="28" viewBox="0 0 28 28">
          <rect width="28" height="28" fill="#2aa6ec" />
          <path d="M0 28V16l10-6 18 12v6z" fill="#164c90" />
          <path d="M15 14l5-3 8 6v7z" fill="#5b82c9" />
          <circle cx="19" cy="6" r="2.500" fill="white" />
        </svg>
      </AppIcon>
      <div className="ml-auto flex h-full items-center text-[13px]">
        <svg width="14" height="8" viewBox="0 0 14 8" fill="none" stroke="white" strokeWidth="1.200">
          <path d="M1 7.500l6-6 6 6" />
        </svg>
        <svg width="20" height="20" viewBox="0 0 20 20" className="ml-[13px]">
          <path d="M2 13a4 4 0 012-7 5 5 0 019 0 4 4 0 011 8H4z" fill="#2a8be0" />
          <circle cx="14" cy="15" r="5" fill="#e0242b" />
          <path d="M12 13l4 4M16 13l-4 4" stroke="white" strokeWidth="1.300" />
        </svg>
        <svg width="20" height="14" viewBox="0 0 20 14" fill="none" stroke="white" className="ml-[10px]">
          <rect x="3.500" y="3.500" width="15" height="9" fill="white" fillOpacity=".4" />
          <path d="M19.500 6v4M1 0v3M4 0v3M0 3h5" />
        </svg>
        <svg width="18" height="18" viewBox="0 0 18 18" fill="none" stroke="white" className="ml-[13px]">
          <path d="M1 16C3 8 8 3 16 1M6 16c1-4 4-7 9-9M11 16c0-2 2-4 5-4" />
          <circle cx="15" cy="15" r="1" fill="white" />
        </svg>
        <svg width="20" height="18" viewBox="0 0 20 18" fill="none" stroke="white" className="ml-[9px]">
          <path d="M1 6h3l5-4v14l-5-4H1zM12 6c1 2 1 4 0 6" />
          <path d="M15 3c2 4 2 8 0 12" stroke="#999" />
        </svg>
        <div className="ml-[12px] flex w-[76px] flex-col items-center leading-[23px] text-[14.5px]">
          <span>9:03 AM</span>
          <span>10/2/2020</span>
        </div>
        <div className="relative ml-[18px] mr-[28px] flex h-[21px] w-[20px] flex-col items-center justify-center gap-[2px] bg-white">
          <span className="h-[1px] w-[13px] bg-[#333]" />
          <span className="h-[1px] w-[13px] bg-[#333]" />
          <span className="h-[1px] w-[13px] bg-[#333]" />
          <span className="absolute left-[9px] top-[9px] flex h-[20px] w-[20px] items-center justify-center rounded-full border border-[#888] bg-[#333] text-[12px] font-bold">3</span>
        </div>
      </div>
    </div>
  );
}

export default function App() {
  return (
    <div className="flex h-[1080px] w-[1920px] flex-col overflow-hidden bg-[#1f2f45] font-['Noto_Sans',sans-serif]">
      <div className="flex h-[1029.300px] shrink-0">
        <ExcelWindow active title="Book3  -  Excel" nameBox="" />
        <ExcelWindow active={false} title="imp..." nameBox="A1" />
      </div>
      <Taskbar />
    </div>
  );
}
